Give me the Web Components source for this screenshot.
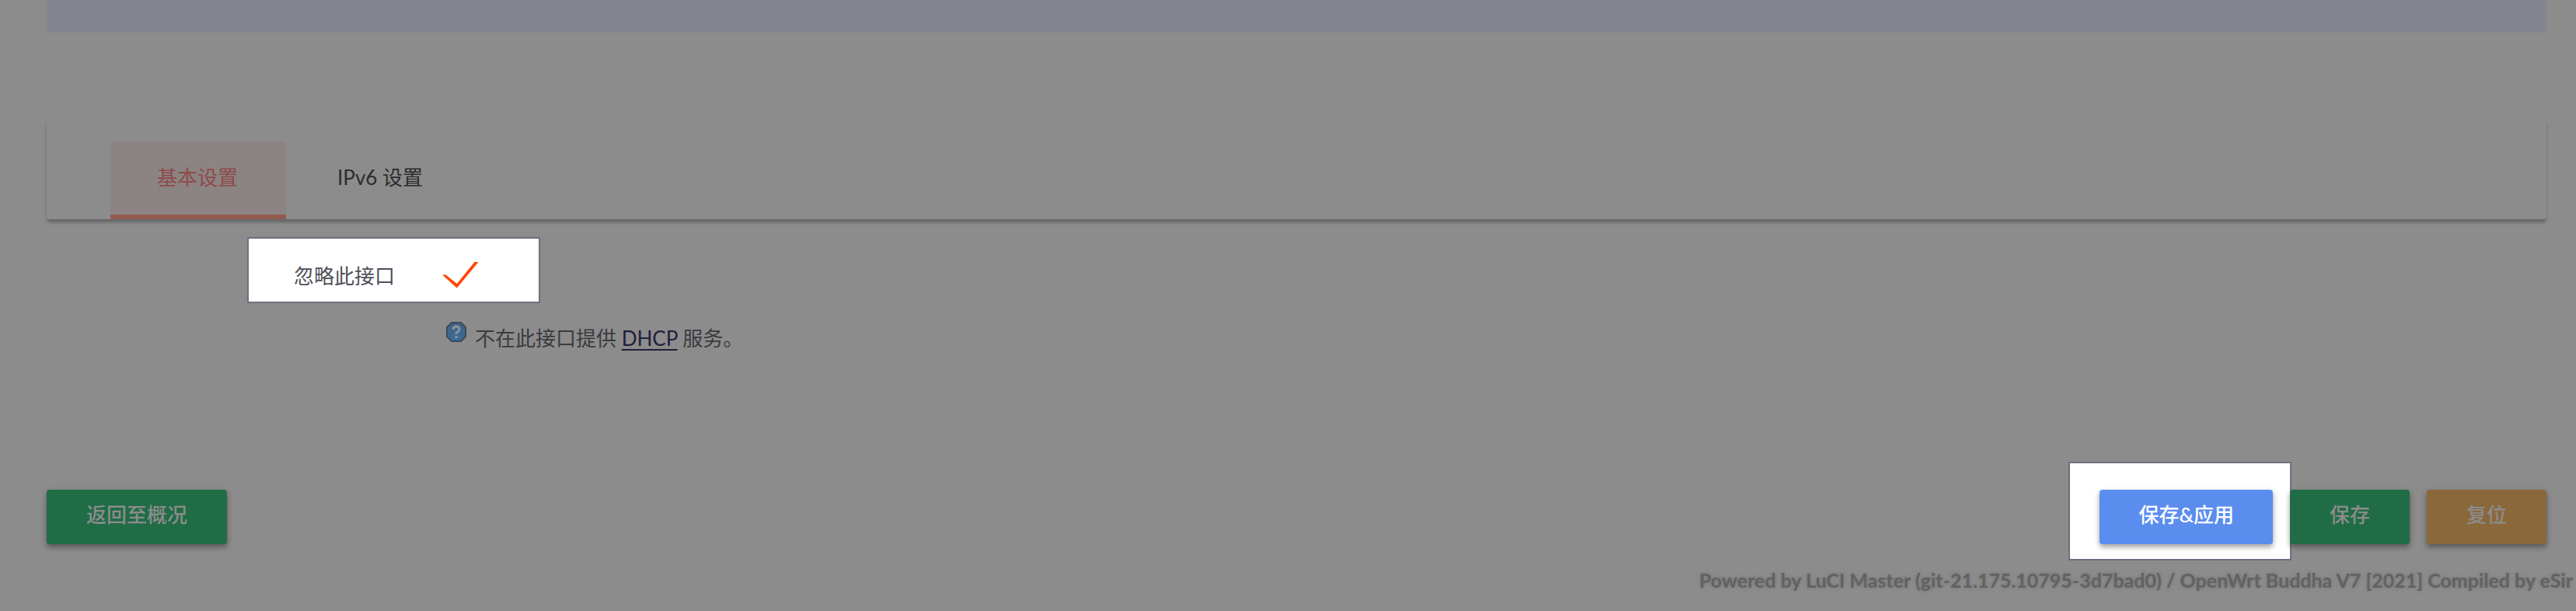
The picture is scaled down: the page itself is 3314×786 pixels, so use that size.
<!DOCTYPE html>
<html lang="zh-CN">
<head>
<meta charset="utf-8">
<title>OpenWrt - LuCI</title>
<style>
html{background:#8c8c8c}
body{margin:0}
</style>
</head>
<body>
<luci-page></luci-page>
<script>
const define = (name, html) => {
  const tpl = document.createElement('template');
  tpl.innerHTML = html;
  customElements.define(name, class extends HTMLElement {
    constructor() {
      super();
      this.attachShadow({mode: 'open'}).append(tpl.content.cloneNode(true));
    }
  });
};

define('luci-band', `<style>:host{display:block;height:42px;background:#83868e}</style>`);

define('luci-tabs', `<style>
:host{display:flex;align-items:flex-end;padding:28px 82px 0;border-radius:4px;background:#8c8c8c;
  box-shadow:0 4px 4px rgba(0,0,0,.18),0 6px 4px -2px rgba(0,0,0,.12)}
</style><slot></slot>`);

define('luci-tab', `<style>
:host{display:block}
a{display:block;padding:26px 66px 28px;line-height:40px;border-bottom:6px solid transparent;color:#2c2c2c;text-decoration:none}
:host([active]) a{padding-left:60px;padding-right:62px;background:#8c8483;border-color:#925b4d;color:#8e4a4b}
</style><a href="#"><slot></slot></a>`);

define('luci-spotlight', `<style>
:host{display:flex;box-sizing:border-box;background:#fff;border:2px solid #6b7080}
</style><slot></slot>`);

define('luci-check', `<style>
:host{display:flex;align-items:center}
label{display:flex;align-items:center;gap:60px;color:#4e5058;line-height:40px}
.box{position:relative;display:block;width:48px;height:40px}
input{appearance:none;display:block;margin:0;width:48px;height:40px}
svg{position:absolute;inset:0;pointer-events:none}
</style>
<label><slot></slot><span class="box"><input type="checkbox" checked>
<svg width="48" height="40" viewBox="0 0 48 40" fill="#ff4500"><path d="M1 18.5H5.5L19.8 30L42.5 2H47.5L19.8 35.5Z"/></svg></span></label>`);

define('luci-help', `<style>
:host{display:flex;gap:10px;align-items:flex-start;color:#3a3b3f;line-height:44px}
a{color:#20203c;text-decoration:underline;text-decoration-thickness:2px;text-underline-offset:4px}
svg{flex:none}
</style>
<svg width="28" height="28" viewBox="0 0 28 28"><defs><linearGradient id="g" x2="0" y2="1"><stop stop-color="#41617f"/><stop offset="1" stop-color="#3b6d99"/></linearGradient></defs><path d="M8 2H20L26 8V20L20 26H8L2 20V8Z" fill="url(#g)" stroke="#3a4a5b" stroke-width="2"/><path d="M10 11Q10 7 14 7Q18 7 18 11Q18 13 14 15V17M14 19V22" fill="none" stroke="#8794a2" stroke-width="3"/></svg>
<span><slot></slot> <a href="#">DHCP</a> <slot name="after"></slot></span>`);

define('luci-button', `<style>
:host{display:block}
button{display:block;box-sizing:border-box;height:70px;border:0;border-radius:4px;margin:0;padding:0 var(--pad,51px) 6px;
  background:var(--bg,#206c46);color:var(--fg,#8c8c8c);font:inherit;font-weight:500;line-height:40px;
  box-shadow:0 4px 6px rgba(0,0,0,.3),0 2px 10px rgba(0,0,0,.1)}
</style><button type="button"><slot></slot></button>`);

define('luci-footer', `<style>
:host{display:block;text-align:right;padding:0 4px 0 0;line-height:40px;color:#626262;font-family:Lato,"Noto Sans CJK SC",sans-serif;font-size:25px;font-weight:700;text-shadow:0 0 4px #707070}
</style><slot></slot>`);

define('luci-page', `<style>
:host{display:flow-root;font:26px Lato,"Noto Sans CJK SC",sans-serif;background:#8c8c8c}
main{padding:0 38px 0 60px}
luci-tabs{margin-top:112px}
.option{margin:23px 0 0 258px;display:flex}
.option luci-spotlight{width:377px;height:85px;padding:14px 0 0 58px}
luci-help{margin:23px 0 0 513px}
.actions{display:flex;justify-content:space-between;margin-top:137px}
.group{display:flex;gap:22px;padding-top:36px}
.group luci-spotlight{margin:-36px -24px 0 0;padding:34px 22px 19px 38px}
.left{padding-top:36px}
.apply{--bg:#5b8def;--fg:#fff;--pad:50px}
.reset{--bg:#8a683a}
luci-footer{margin-top:5px;padding-bottom:20px}
</style>
<main>
<luci-band></luci-band>
<luci-tabs><luci-tab active>基本设置</luci-tab><luci-tab>IPv6 设置</luci-tab></luci-tabs>
<div class="option"><luci-spotlight><luci-check>忽略此接口</luci-check></luci-spotlight></div>
<luci-help>不在此接口提供<span slot="after">服务。</span></luci-help>
<div class="actions">
<div class="left"><luci-button>返回至概况</luci-button></div>
<div class="group"><luci-spotlight><luci-button class="apply">保存&amp;应用</luci-button></luci-spotlight><luci-button>保存</luci-button><luci-button class="reset">复位</luci-button></div>
</div>
</main>
<luci-footer>Powered by LuCI Master (git-21.175.10795-3d7bad0) / OpenWrt Buddha V7 [2021] Compiled by eSir</luci-footer>`);
</script>
</body>
</html>
